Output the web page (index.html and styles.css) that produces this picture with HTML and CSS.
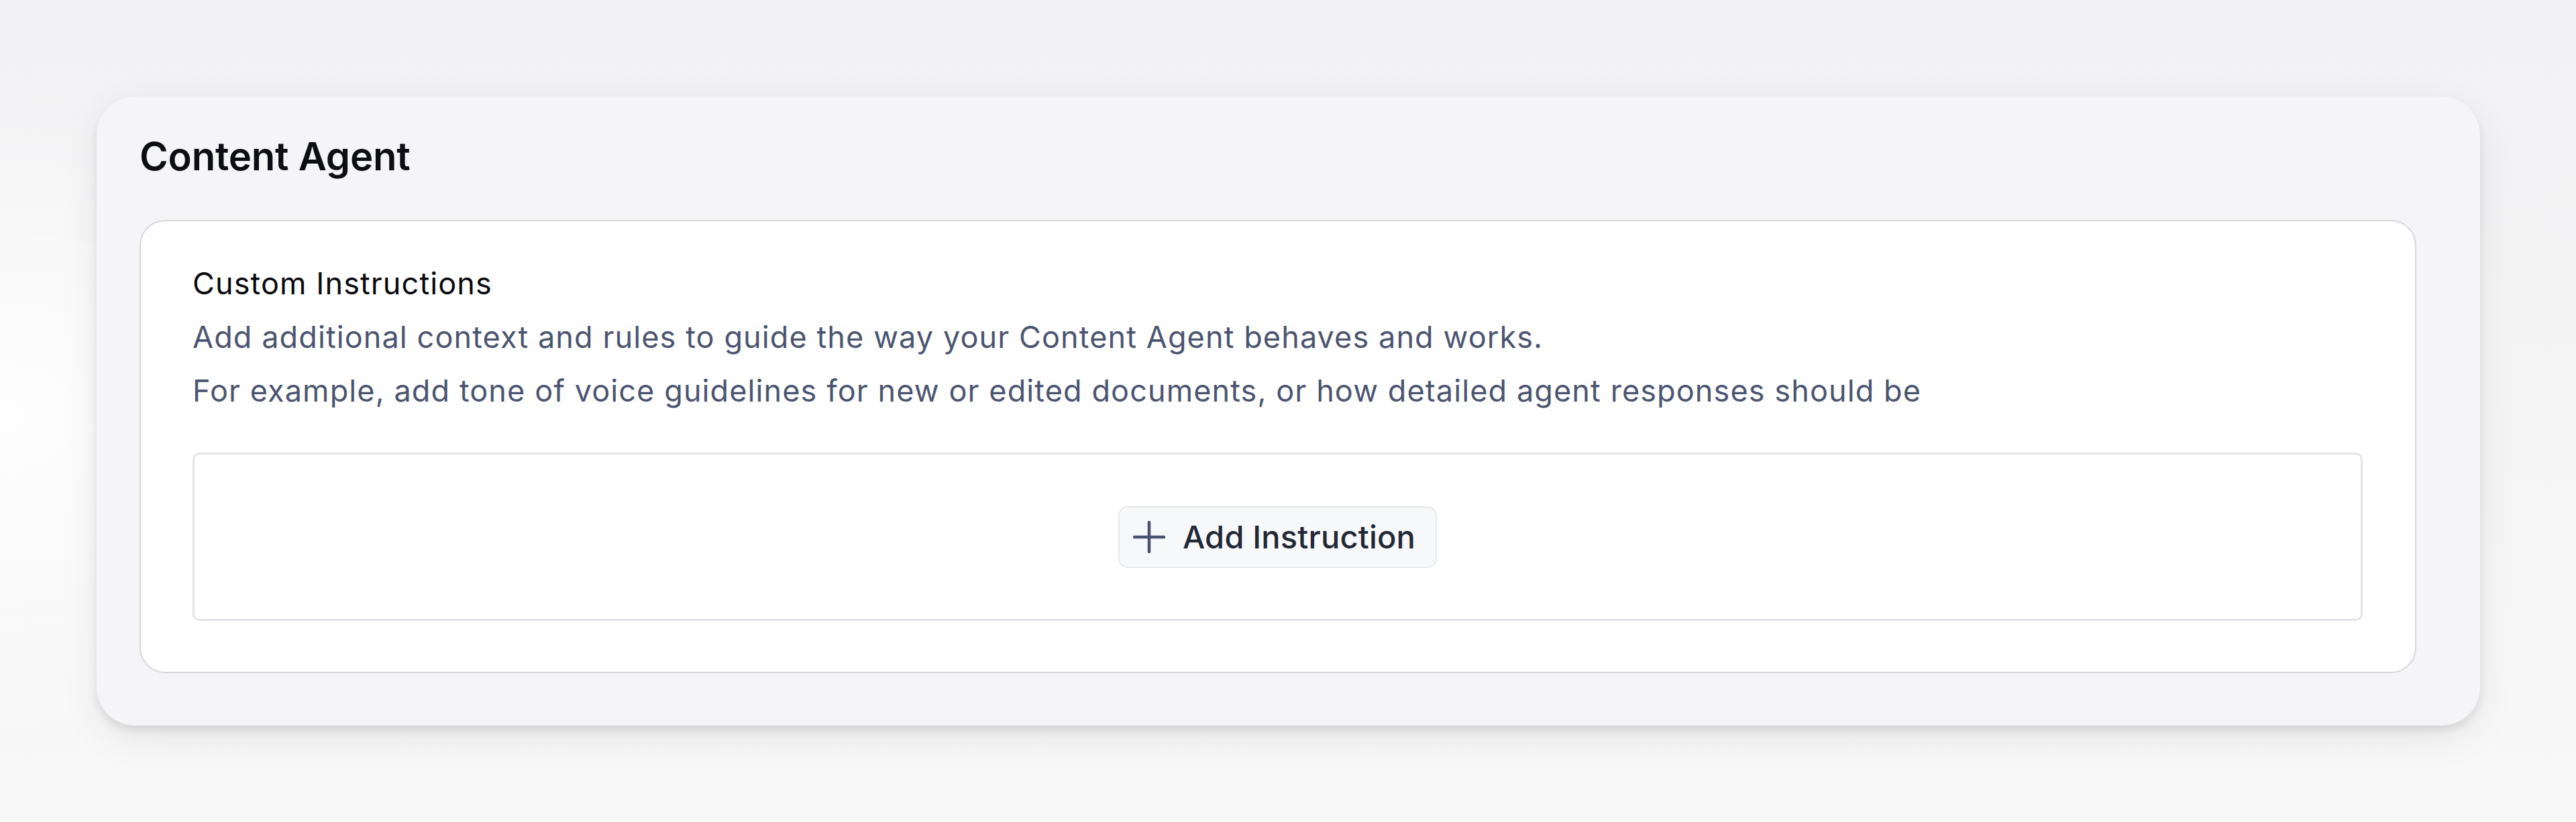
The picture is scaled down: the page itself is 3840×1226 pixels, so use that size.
FILE: index.html
```html
<!DOCTYPE html>
<html lang="en">
<head>
<meta charset="utf-8">
<title>Content Agent</title>
<link rel="stylesheet" href="styles.css">
</head>
<body>
  <section class="agent-card">
    <h1 class="agent-title">Content Agent</h1>
    <div class="panel">
      <h2 class="panel-title">Custom Instructions</h2>
      <p class="panel-text">Add additional context and rules to guide the way your Content Agent behaves and works.</p>
      <p class="panel-text">For example, add tone of voice guidelines for new or edited documents, or how detailed agent responses should be</p>
      <div class="drop-box">
        <button class="add-btn" type="button">
          <svg class="add-icon" viewBox="0 0 48 48" aria-hidden="true">
            <path d="M24 2 V46 M2 24 H46" fill="none" stroke="#4a5271" stroke-width="4.5" stroke-linecap="round"/>
          </svg>
          <span>Add Instruction</span>
        </button>
      </div>
    </div>
  </section>
</body>
</html>
```

FILE: styles.css
```css
html, body {
  margin: 0;
  padding: 0;
}

body {
  min-height: 1226px;
  box-sizing: border-box;
  padding: 144px 143px 0 144px;
  font-family: Inter, "Noto Sans", "Liberation Sans", sans-serif;
  background:
    radial-gradient(ellipse 700px 500px at 0px 620px, rgba(255,255,255,0.9), rgba(255,255,255,0) 100%),
    linear-gradient(180deg, #f2f2f4 0%, #f5f5f6 50%, #f8f8f9 100%);
}

.agent-card {
  background: #f5f5f7;
  border-radius: 57px;
  padding: 54px 95px 78px 64px;
  box-shadow:
    0 8px 14px rgba(0, 0, 0, 0.09),
    0 18px 60px rgba(0, 0, 0, 0.07);
}

.agent-title {
  margin: 0 0 60px 0;
  font-size: 58px;
  font-weight: 600;
  line-height: 70px;
  color: #0c0e13;
  letter-spacing: -0.2px;
}

.panel {
  background: #ffffff;
  border: 2px solid #d6d7e0;
  border-radius: 38px;
  padding: 53px 78px 76px 77px;
}

.panel-title,
.panel-text {
  margin: 0;
  font-size: 45px;
  line-height: 80px;
  letter-spacing: 1.1px;
}

.panel-title {
  font-weight: 400;
  color: #08090c;
}

.panel-text {
  font-weight: 400;
  color: #4b5470;
}

.drop-box {
  margin-top: 52px;
  height: 251px;
  box-sizing: border-box;
  border: 3px solid #e3e3ea;
  border-radius: 10px;
  display: flex;
  align-items: center;
  justify-content: center;
}

.add-btn {
  display: flex;
  align-items: center;
  gap: 26px;
  height: 92px;
  box-sizing: border-box;
  padding: 0 30px 0 20px;
  background: #f7f8fa;
  border: 2px solid #e8e8ed;
  border-radius: 14px;
  font-family: inherit;
  font-size: 47px;
  font-weight: 500;
  letter-spacing: 0.2px;
  color: #232836;
  cursor: pointer;
}

.add-icon {
  width: 48px;
  height: 48px;
  flex: none;
}
```
